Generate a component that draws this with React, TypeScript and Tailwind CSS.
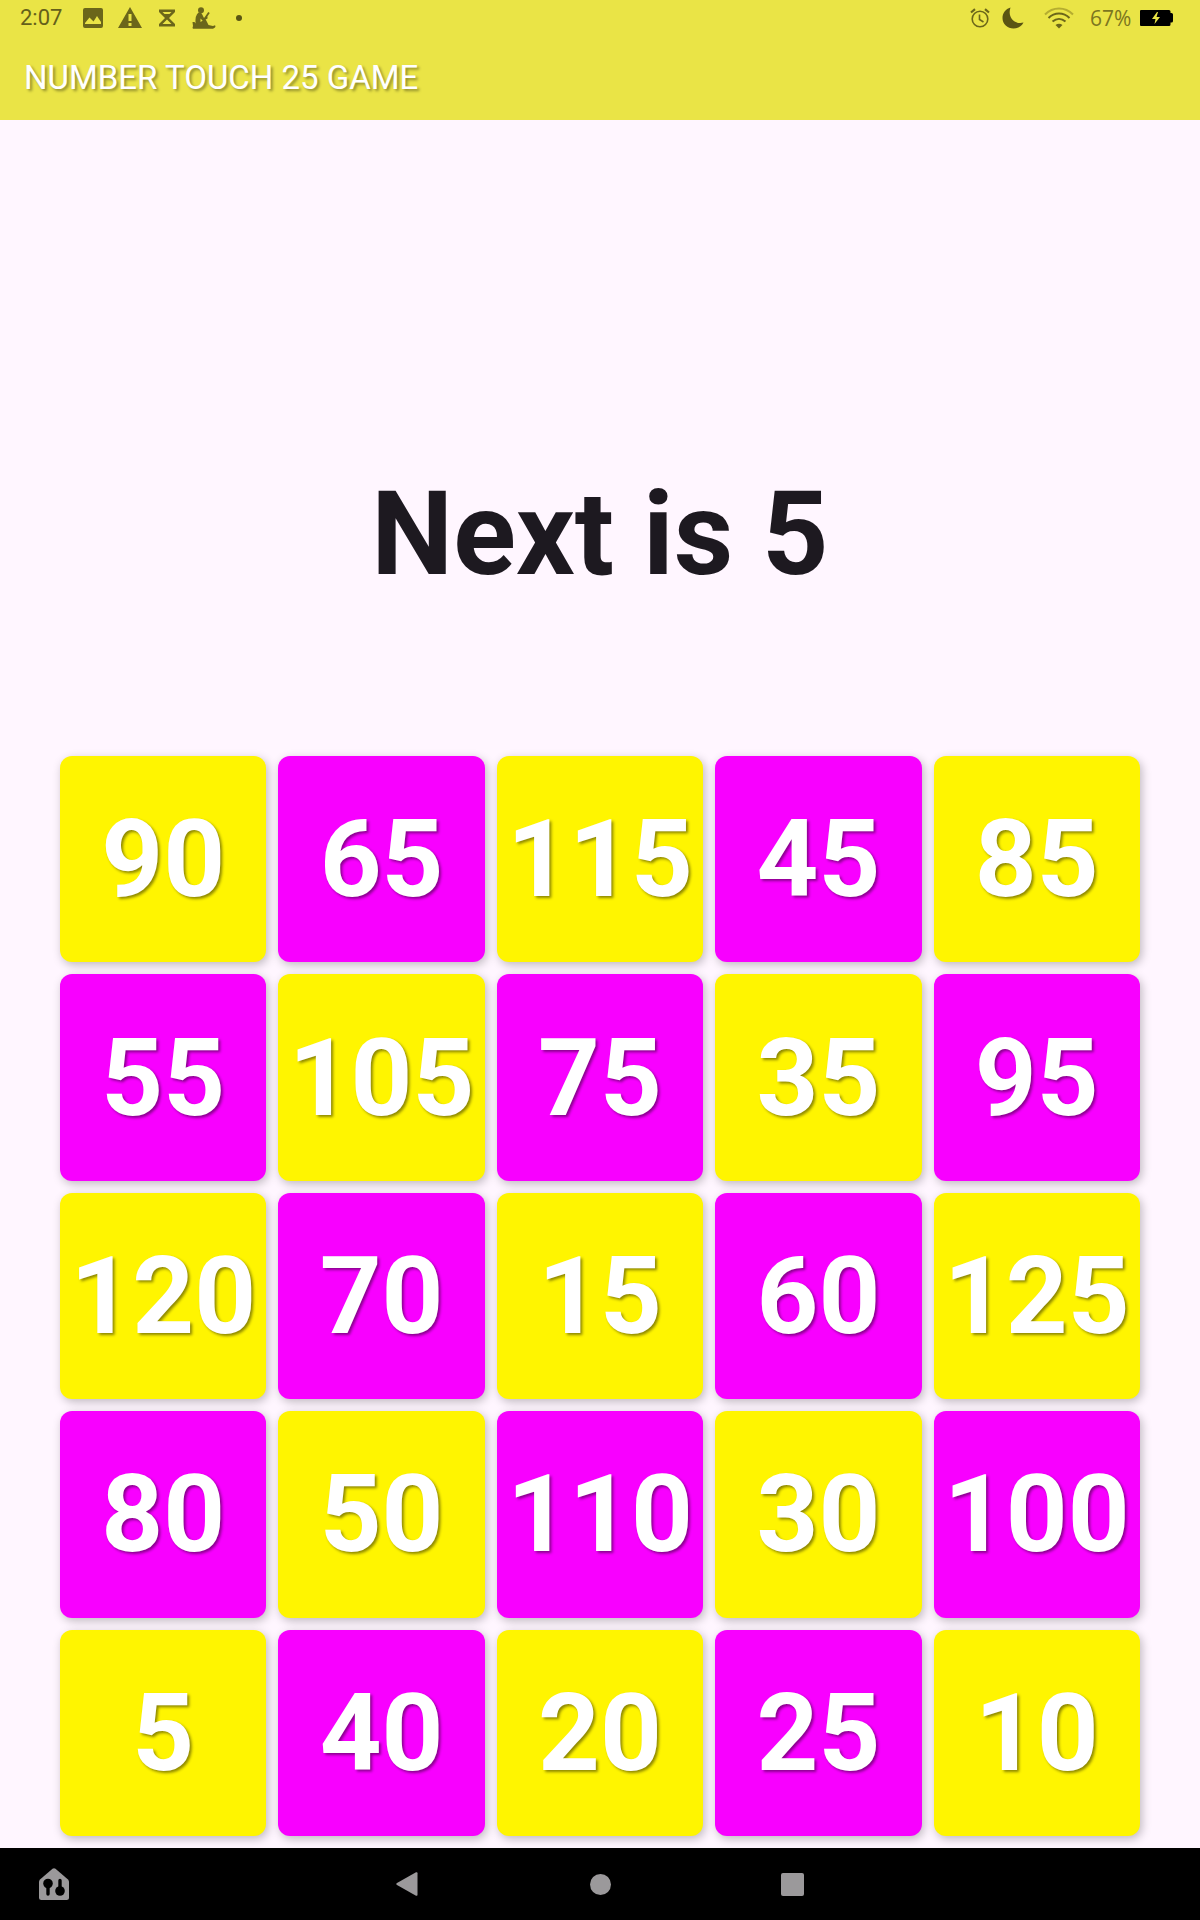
import React, { useState } from "react";

const STEP = 5;

const tiles = [
  [90, 65, 115, 45, 85],
  [55, 105, 75, 35, 95],
  [120, 70, 15, 60, 125],
  [80, 50, 110, 30, 100],
  [5, 40, 20, 25, 10],
];

function classNames(...classes: string[]) {
  return classes.filter(Boolean).join(" ");
}

const StatusBar = () => {
  return (
    <div className="flex h-9 items-center justify-between pl-5 pr-[27px] text-[#6b661a]">
      <div className="flex items-center">
        <span className="w-[62px] text-[22px] leading-6 text-[#65601a]">2:07</span>

        {/* Picture */}
        <svg className="ml-px h-5 w-5" viewBox="0 0 20 20">
          <path
            fill="currentColor"
            fillRule="evenodd"
            d="M2 0H18Q20 0 20 2V18Q20 20 18 20H2Q0 20 0 18V2Q0 0 2 0ZM2 16H18V14L14 8L10.500 13.500L6.500 9.500L2 15Z"
          />
        </svg>

        {/* Warning */}
        <svg className="ml-[15px] h-[22px] w-6" viewBox="0 0 24 22">
          <path
            fill="currentColor"
            fillRule="evenodd"
            d="M12 0L24 21H0ZM10.500 7V14H13.500V7ZM10.500 16V19H13.500V16Z"
          />
        </svg>

        {/* Hourglass */}
        <svg className="ml-4 h-[18px] w-[18px]" viewBox="0 0 18 18">
          <path
            fill="currentColor"
            fillRule="evenodd"
            d="M1 0.500H17V3L11 9L17 15V17.500H1V15L7 9L1 3ZM4.500 3L6.500 5H11.500L13.500 3ZM9 10.500L4.500 15H13.500Z"
          />
        </svg>

        {/* Sitting figure */}
        <svg className="ml-4 h-[22px] w-6" viewBox="0 0 24 22">
          <circle cx="9" cy="3.200" r="3" fill="currentColor" />
          <path
            fill="currentColor"
            d="M6.500 5.500Q10 5 10.500 8L12 11L15.500 9.500V11.500L11 14L8.500 11.500V15L12.500 12.500Q14 12 14.500 14L16.500 18L21 19L23 18.200Q24 19 23 20.500L21 21.800H1Q0 21 1 19L0.500 15H2.500L3.500 16.500Q3 8 6.500 5.500Z"
          />
          <path
            d="M11.500 13.500L17 5.500"
            stroke="currentColor"
            strokeWidth="1.800"
            fill="none"
          />
        </svg>

        <span className="ml-5 h-[6px] w-[6px] rounded-full bg-[#5a5513]" />
      </div>

      <div className="flex items-center">
        {/* Alarm */}
        <svg
          className="h-5 w-5"
          viewBox="0 0 20 20"
          fill="none"
          stroke="currentColor"
          strokeWidth="1.600"
        >
          <circle cx="10" cy="11" r="7.800" />
          <path d="M9.500 6.500V11.500L13.500 14" />
          <path d="M1 4.500L5 1.200M19 4.500L15 1.200" strokeWidth="2.200" />
        </svg>

        {/* Moon */}
        <svg className="ml-3 h-[22px] w-[22px]" viewBox="0 0 22 22">
          <path
            fill="#5a5413"
            d="M8.500 0.500C3.500 2 0.500 6 0.500 11C0.500 17 5.500 21.500 11.500 21.500C16 21.500 19.500 19.500 21.500 15.500C13 18 5 10.500 8.500 0.500Z"
          />
        </svg>

        {/* Wifi */}
        <svg
          className="ml-5 h-[22px] w-[30px]"
          viewBox="0 0 30 22"
          fill="none"
          stroke="currentColor"
          strokeWidth="2"
        >
          <path d="M1 7.500C9 -0.500 21 -0.500 29 7.500" stroke="#b5ad30" />
          <path d="M4.500 11C10.500 5 19.500 5 25.500 11" />
          <path d="M8.500 14.500C12.500 11 17.500 11 21.500 14.500" />
          <path d="M11.500 18Q15 15.500 18.500 18L15 21.500Z" fill="currentColor" stroke="none" />
        </svg>

        <span className="ml-4 w-12 font-['Open_Sans',sans-serif] text-[21px] leading-6 text-[#7c7620]">
          67%
        </span>

        {/* Battery */}
        <svg className="ml-[2px] h-4 w-[33px]" viewBox="0 0 33 16">
          <path
            fill="#000"
            d="M1 0H29Q30.500 0 30.500 1.500V3H31.500Q33 3 33 4.500V11Q33 12.500 31.500 12.500H30.500V14.500Q30.500 16 29 16H1Q0 16 0 15V1Q0 0 1 0Z"
          />
          <path fill="#eae446" d="M17 2L12 9H15.500L14.500 14L20 7H16.500L18 2Z" />
        </svg>
      </div>
    </div>
  );
};

const NavigationBar = () => {
  return (
    <nav className="grid h-[72px] grid-cols-[1fr_auto_1fr] items-center bg-black text-[#9b999b]">
      <div className="flex items-center justify-between pl-[38px]">
        <button aria-label="Device dashboard">
          <svg className="h-8 w-8" viewBox="0 0 32 32">
            <path
              fill="currentColor"
              d="M14.500 0.800Q16 -0.400 17.500 0.800L30 11.500Q31 12.500 31 14V29.500Q31 32 28.500 32H3.500Q1 32 1 29.500V14Q1 12.500 2 11.500Z"
            />
            <circle cx="10" cy="15.500" r="4.800" fill="#000" />
            <circle cx="22" cy="23" r="4.800" fill="#000" />
            <path
              d="M10 15V26M22 23V12.500"
              stroke="#000"
              strokeWidth="3.400"
              strokeLinecap="round"
            />
          </svg>
        </button>
        <button aria-label="Back" className="mr-[172px]">
          <svg className="h-6 w-[22px]" viewBox="0 0 22 24">
            <path
              fill="currentColor"
              d="M1 11L20 0.300Q21.500 -0.300 21.500 1.200V22.800Q21.500 24.300 20 23.700L1 13Q-0.500 12 1 11Z"
            />
          </svg>
        </button>
      </div>
      <button aria-label="Home" className="h-[21px] w-[21px] rounded-full bg-[#9b999b]" />
      <div className="pl-[170px]">
        <button
          aria-label="Recent apps"
          className="block h-[23px] w-[23px] rounded-[2px] bg-[#9b999b]"
        />
      </div>
    </nav>
  );
};

const App = () => {
  const [next, setNext] = useState<number>(STEP);

  const handleTouch = (value: number) => {
    if (value === next) setNext(next + STEP);
  };

  return (
    <div className="flex min-h-screen flex-col bg-[#fff6ff] font-[Roboto,sans-serif]">
      <header className="h-[120px] bg-[#eae446]">
        <StatusBar />
        <h1 className="px-6 pt-[22px] text-[33px] leading-10 text-white [text-shadow:2px_2px_3px_rgba(0,0,0,0.4)]">
          NUMBER TOUCH 25 GAME
        </h1>
      </header>

      <main className="flex flex-1 flex-col justify-end px-[60px] pb-3">
        <p className="pb-[154px] text-center text-[116px] font-bold leading-[136px] text-[#1d1920]">
          Next is {next}
        </p>

        <div className="grid grid-cols-5 gap-3">
          {tiles.flat().map((value, index) => (
            <button
              key={value}
              onClick={() => handleTouch(value)}
              className={classNames(
                index % 2 === 0 ? "bg-[#fff500]" : "bg-[#f800ff]",
                "flex aspect-square items-center justify-center rounded-xl text-[108px] font-bold leading-none text-white shadow-[2px_3px_10px_rgba(0,0,0,0.25)] [text-shadow:2px_2px_3px_rgba(0,0,0,0.45)]"
              )}
            >
              {value}
            </button>
          ))}
        </div>
      </main>

      <NavigationBar />
    </div>
  );
};

export default App;
